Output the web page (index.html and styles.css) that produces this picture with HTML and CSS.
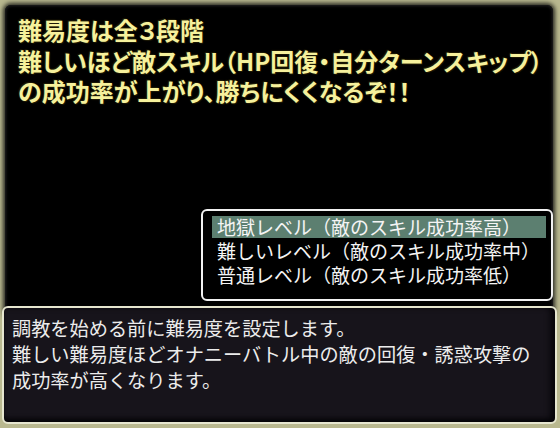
FILE: index.html
```html
<!DOCTYPE html>
<html lang="ja">
<head>
  <meta charset="UTF-8" />
  <title>難易度設定</title>
  <link rel="stylesheet" href="styles.css">
</head>
<body>

  <!-- Main window -->
  <section class="board">
    <h1 class="notice">
      難易度は全３段階<br>
      難しいほど敵スキル（HP回復・自分ターンスキップ）<br>
      の成功率が上がり、勝ちにくくなるぞ！！
    </h1>

    <!-- Difficulty choices -->
    <ul class="choices">
      <li class="choice active">地獄レベル（敵のスキル成功率高）</li>
      <li class="choice">難しいレベル（敵のスキル成功率中）</li>
      <li class="choice">普通レベル（敵のスキル成功率低）</li>
    </ul>
  </section>

  <!-- Help text -->
  <section class="message">
    <p>調教を始める前に難易度を設定します。<br>
    難しい難易度ほどオナニーバトル中の敵の回復・誘惑攻撃の<br>
    成功率が高くなります。</p>
  </section>

</body>
</html>
```

FILE: styles.css
```css
* { margin: 0; padding: 0; box-sizing: border-box; }

html, body {
  width: 560px;
  height: 428px;
  overflow: hidden;
  background: #b9b88f;
  font-family: "Noto Sans CJK JP", "Noto Sans", sans-serif;
}

.board {
  margin: 5px 0 0 5px;
  width: 548px;
  height: 312px;
  background: #000;
  border-radius: 6px;
  box-shadow: 0 0 4px 2px #2a2a22, inset 0 0 3px 1px #222;
  padding: 10px 9px 0 13px;
  display: flex;
  flex-direction: column;
}

/* proportional kana keeps the long second line inside the window */
.notice {
  font-size: 24px;
  line-height: 30.5px;
  font-weight: 700;
  color: #f6f19c;
  font-feature-settings: "palt";
  text-shadow: 0 0 2px #1e1a06, 1px 1px 1px #1e1a06, -1px -1px 1px #1e1a06;
  white-space: nowrap;
}

.choices {
  list-style: none;
  margin: 102px 0 0 183px;
  width: 352px;
  height: 92px;
  border: 2px solid #f2f2f2;
  border-radius: 6px;
  padding: 4px 5px 0 9px;
}

.choice {
  height: 24px;
  line-height: 24px;
  padding-left: 5px;
  font-size: 19px;
  color: #f4f4f4;
  white-space: nowrap;
}

.choice.active {
  background: linear-gradient(#000 0 1px, #5c7f70 1px 23px, #000 23px);
}

.message {
  position: relative;
  margin: -11px 0 0 2px;
  width: 555px;
  height: 118px;
  background: #17141b;
  border: 2px solid #e6e6cf;
  border-radius: 6px;
  box-shadow: inset -6px 0 6px -2px #050407, inset 0 -5px 5px -2px #050407;
  padding: 7px 8px 0 8px;
}

.message p {
  font-size: 19.2px;
  line-height: 26px;
  color: #ececec;
  white-space: nowrap;
}
```
